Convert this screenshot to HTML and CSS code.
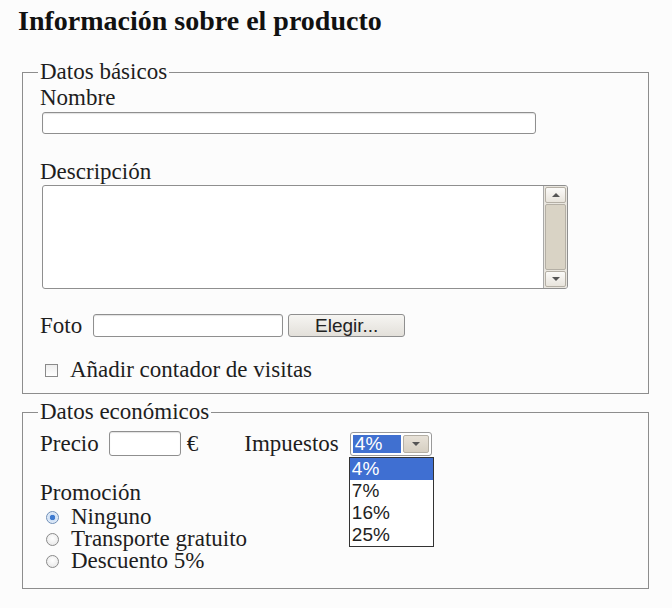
FILE: index.html
```html
<!DOCTYPE html>
<html lang="es">
<head>
<meta charset="utf-8">
<title>Información sobre el producto</title>
<link rel="stylesheet" href="styles.css">
</head>
<body>
<h1 class="title">Información sobre el producto</h1>
<div class="wrap">
  <fieldset class="group group-basic">
    <legend class="legend">Datos básicos</legend>
    <div class="inner">
      <div class="label">Nombre</div>
      <div class="input input-name"></div>
      <div class="label label-desc">Descripción</div>
      <div class="textarea">
        <div class="ta-body"></div>
        <div class="scrollbar">
          <div class="sb-btn"><span class="tri-up"></span></div>
          <div class="sb-thumb"></div>
          <div class="sb-btn"><span class="tri-down"></span></div>
        </div>
      </div>
      <div class="row row-foto">
        <span class="text">Foto</span>
        <div class="input input-foto"></div>
        <div class="button">Elegir...</div>
      </div>
      <div class="row row-check">
        <span class="checkbox"></span>
        <span class="text">Añadir contador de visitas</span>
      </div>
    </div>
  </fieldset>

  <fieldset class="group group-eco">
    <legend class="legend">Datos económicos</legend>
    <div class="inner">
      <div class="row row-price">
        <span class="text">Precio</span>
        <div class="input input-price"></div>
        <span class="text euro">€</span>
        <span class="text tax">Impuestos</span>
        <div class="select-wrap">
          <div class="select">
            <span class="sel-value">4%</span>
            <span class="sel-btn"><span class="tri-down"></span></span>
          </div>
          <ul class="dropdown">
            <li class="opt opt-active">4%</li>
            <li class="opt">7%</li>
            <li class="opt">16%</li>
            <li class="opt">25%</li>
          </ul>
        </div>
      </div>
      <div class="label label-promo">Promoción</div>
      <div class="radios">
        <div class="row row-radio"><span class="radio radio-on"></span><span class="text">Ninguno</span></div>
        <div class="row row-radio"><span class="radio"></span><span class="text">Transporte gratuito</span></div>
        <div class="row row-radio"><span class="radio"></span><span class="text">Descuento 5%</span></div>
      </div>
    </div>
  </fieldset>
</div>
</body>
</html>
```

FILE: styles.css
```css
* { box-sizing: border-box; }

html, body {
  margin: 0;
  padding: 0;
  background: #fcfcfc;
}

body {
  font-family: "Liberation Serif", "Times New Roman", serif;
  font-size: 23px;
  line-height: 22px;
  color: #1e1e1e;
  width: 672px;
  height: 608px;
  overflow: hidden;
}

.title {
  margin: 0;
  padding: 6px 0 0 18px;
  font-size: 28px;
  line-height: 30px;
  font-weight: bold;
  color: #111;
}

.wrap {
  padding: 0 23px 0 22px;
  margin-top: 26px;
}

.group {
  margin: 0;
  padding: 0 15px 12px 15px;
  border: 1px solid #8d8d8d;
  min-width: 0;
}

.group-eco {
  margin-top: 8px;
  padding-bottom: 16px;
}

.legend {
  padding: 0 2px;
  line-height: 20px;
}

.inner {
  padding-left: 2px;
}

.label {
  margin-top: 5px;
}

.label-desc {
  margin-top: 27px;
}

.input {
  height: 22px;
  border: 1px solid #8f8f8f;
  border-radius: 3px;
  background: #fff;
  box-shadow: inset 0 1px 1px rgba(0,0,0,0.12);
}

.input-name {
  margin-top: 3px;
  margin-left: 2px;
  width: 494px;
}

.textarea {
  display: flex;
  margin-top: 2px;
  margin-left: 2px;
  width: 526px;
  height: 104px;
  border: 1px solid #8f8f8f;
  border-radius: 3px;
  background: #fff;
  overflow: hidden;
}

.ta-body { flex: 1; }

.scrollbar {
  width: 24px;
  display: flex;
  flex-direction: column;
  border-left: 1px solid #a9a9a9;
  background: #e9e6df;
  padding: 1px;
}

.sb-btn {
  height: 16px;
  display: flex;
  align-items: center;
  justify-content: center;
  background: linear-gradient(#fbfaf8, #e8e4dc);
  border: 1px solid #b4afa5;
  border-radius: 2px;
}

.sb-thumb {
  flex: 1;
  margin: 1px 0;
  background: #d9d3c5;
  border: 1px solid #b4afa5;
  border-radius: 2px;
}

.tri-up, .tri-down {
  width: 0;
  height: 0;
  border-left: 4px solid transparent;
  border-right: 4px solid transparent;
}

.tri-up { border-bottom: 4px solid #555; }
.tri-down { border-top: 4px solid #555; }

.row {
  display: flex;
  align-items: center;
}

.row-foto {
  margin-top: 25px;
  height: 23px;
}

.input-foto {
  width: 190px;
  height: 23px;
  margin-left: 11px;
}

.button {
  width: 117px;
  height: 23px;
  margin-left: 5px;
  border: 1px solid #8f8f8f;
  border-radius: 3px;
  background: linear-gradient(#f6f5f2, #e3e0da);
  font-family: "Liberation Sans", Arial, sans-serif;
  font-size: 19px;
  line-height: 21px;
  text-align: center;
  color: #222;
}

.row-check {
  margin-top: 22px;
}

.checkbox {
  width: 13px;
  height: 13px;
  margin: 0 12px 0 5px;
  border: 1px solid #8a8a8a;
  background: linear-gradient(#eeeeee, #ffffff);
}

.row-price {
  margin-top: 9px;
  height: 25px;
}

.input-price {
  width: 72px;
  height: 25px;
  margin-left: 10px;
}

.euro { margin-left: 6px; }
.tax { margin-left: 46px; }

.select-wrap {
  position: relative;
  margin-left: 11px;
}

.select {
  display: flex;
  width: 82px;
  height: 24px;
  border: 1px solid #9a9a9a;
  border-radius: 3px;
  background: #fff;
  padding: 2px;
  gap: 2px;
}

.sel-value {
  width: 48px;
  background: #4070d0;
  color: #fff;
  font-family: "Liberation Sans", Arial, sans-serif;
  font-size: 19px;
  line-height: 18px;
  padding-left: 2px;
}

.sel-btn {
  flex: 1;
  display: flex;
  align-items: center;
  justify-content: center;
  background: linear-gradient(#e8e2d8, #d6cfc2);
  border: 1px solid #b4afa5;
  border-radius: 2px;
}

.dropdown {
  position: absolute;
  left: -1px;
  top: 25px;
  width: 85px;
  margin: 0;
  padding: 0;
  list-style: none;
  border: 1px solid #333;
  background: #fff;
  z-index: 2;
}

.opt {
  height: 22px;
  padding-left: 2px;
  font-family: "Liberation Sans", Arial, sans-serif;
  font-size: 19px;
  line-height: 22px;
  color: #222;
}

.opt-active {
  background: #3f6fd2;
  color: #fff;
}

.label-promo {
  margin-top: 26px;
}

.radios {
  margin-top: 2px;
}

.row-radio {
  height: 22px;
}

.radio {
  width: 13px;
  height: 13px;
  margin: 0 12px 0 6px;
  border: 1px solid #8a8a8a;
  border-radius: 50%;
  background: radial-gradient(circle at 50% 40%, #ffffff, #e4e4e4);
}

.radio-on {
  border-color: #6f8fb8;
  background: radial-gradient(circle, #3e7ad0 0 2.5px, #cfe0f5 3px, #f4f8fd 100%);
}
```
